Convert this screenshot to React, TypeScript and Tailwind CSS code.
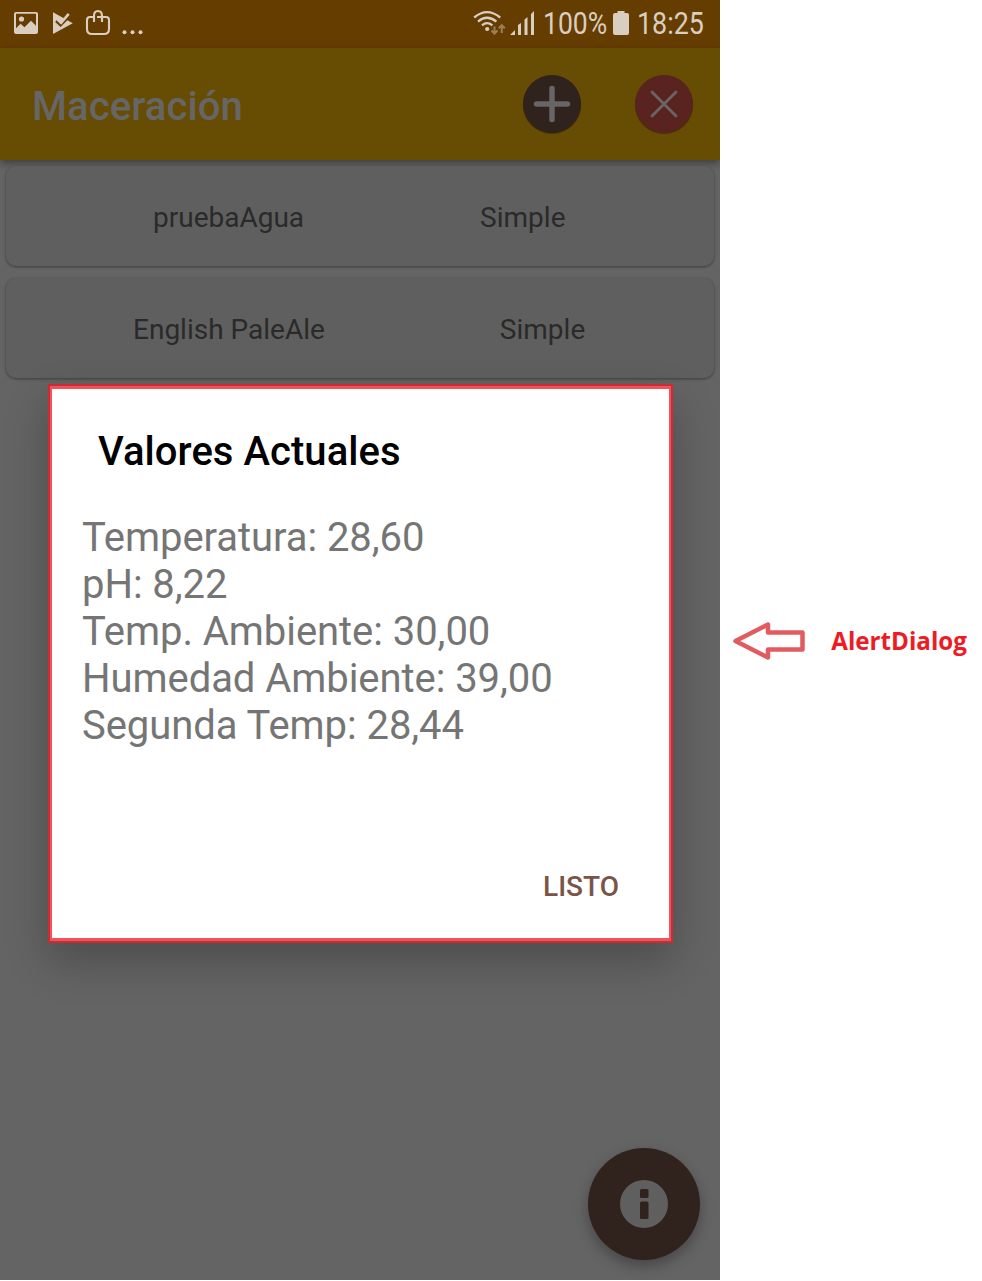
import React from "react";

function StatusBar() {
  return (
    <div className="flex h-12 shrink-0 bg-[#663d00] text-[#d9cebf]">
      <svg width="150" height="48" viewBox="0 0 150 48" fill="currentColor">
        <path fillRule="evenodd" d="M16 12h20a2 2 0 0 1 2 2v18a2 2 0 0 1-2 2H16a2 2 0 0 1-2-2V14a2 2 0 0 1 2-2zM16 13.8v14.4l4.5-4.5 4 3.5 6.5-6.5 5 5V13.8z" />
        <circle cx="21.5" cy="19" r="2.6" />
        <path d="M53 12.3V34L72.8 23.2z" />
        <path d="M56 21l4.6 4.3L70.5 15.5" fill="none" stroke="#663d00" strokeWidth="2.4" />
        <path d="M57.5 19.5l3.6 3.3 7.6-9" fill="none" stroke="currentColor" strokeWidth="2.6" />
        <path d="M93 17h-3q-3 0-3 3v9q0 5 5 5h12q5 0 5-5v-9q0-3-3-3h-9M94 22v-6q0-5 4-5t4 5v6" fill="none" stroke="currentColor" strokeWidth="2.1" />
        <circle cx="124.5" cy="32.3" r="2" /><circle cx="132.5" cy="32.3" r="2" /><circle cx="140.5" cy="32.3" r="2" />
      </svg>
      <svg className="ml-[320px] shrink-0" width="70" height="48" viewBox="0 0 70 48" fill="currentColor">
        <g fill="none" stroke="currentColor" strokeWidth="2.3">
          <path d="M4.2 17.5Q17 6.8 30.2 17.5" />
          <path d="M8 21.6Q17 14 26.4 21.6" />
          <path d="M12 25.3Q17 21 22.4 25.3" />
        </g>
        <circle cx="17.2" cy="29" r="2.1" />
        <g fill="none" stroke="#9b8057" strokeWidth="2">
          <path d="M24.5 26.5v7M21.5 30.5l3 3 3-3M31.8 33v-7.5M28.8 28.2l3-3 3 3" />
        </g>
        <path d="M40 35l5-5v5zM48 25l3-2v12h-3zM54.5 19.5l3-2.5v18h-3zM61 14l3-3v24h-3z" />
      </svg>
      <div className="w-[73px] shrink-0 pl-[3px] font-[Roboto] text-[32px] leading-[47px]">
        <span className="inline-block origin-left scale-x-[0.83]">100%</span>
      </div>
      <svg className="mr-[7px] shrink-0" width="17" height="48" viewBox="0 0 17 48" fill="currentColor">
        <path d="M4.5 11h7v2H14q2 0 2 2v18q0 2-2 2H2q-2 0-2-2V15q0-2 2-2h2.5z" />
      </svg>
      <div className="w-[82px] shrink-0 font-[Roboto] text-[32px] leading-[47px]">
        <span className="inline-block origin-left scale-x-[0.84]">18:25</span>
      </div>
    </div>
  );
}

function RecipeCard({ name, kind, className }: { name: string; kind: string; className: string }) {
  return (
    <div className={"flex h-[100px] shrink-0 items-center rounded-[10px] bg-[#5f5f5f] pt-[3px] text-[28px] text-[#2a2a2a] shadow-[0_1px_3px_rgba(0,0,0,0.4)] " + className}>
      <span>{name}</span>
      <span>{kind}</span>
    </div>
  );
}

function Dialog() {
  return (
    <div className="absolute left-[48px] top-[384px] h-[559px] w-[625px] border-2 border-[#c92c34] shadow-[0_18px_40px_rgba(0,0,0,0.24)]">
      <div className="flex h-full flex-col border-[3px] border-l-2 border-r-2 border-[#f4525a] bg-white">
        <h2 className="pl-[46px] pt-[39px] text-[40px] font-medium leading-[48px] tracking-[0.05px] text-black">Valores Actuales</h2>
        <div className="pl-[30px] pt-[38px] text-[40px] leading-[47px] tracking-[-0.06px] text-[#757575]">
          <p>Temperatura: 28,60</p>
          <p>pH: 8,22</p>
          <p>Temp. Ambiente: 30,00</p>
          <p>Humedad Ambiente: 39,00</p>
          <p>Segunda Temp: 28,44</p>
        </div>
        <button className="mr-[50px] mt-auto self-end pb-[34px] text-[28px] font-medium leading-[34px] text-[#795548]">LISTO</button>
      </div>
    </div>
  );
}

export default function App() {
  return (
    <main className="flex h-[1281px] w-[982px] overflow-hidden bg-white font-[Roboto,sans-serif]">
      <section className="relative flex h-[1280px] w-[720px] shrink-0 flex-col overflow-hidden bg-[#646464]">
        <StatusBar />
        <header className="flex h-28 shrink-0 items-center bg-[#664d03] pl-8 pr-[26px] shadow-[0_3px_8px_rgba(0,0,0,0.4)]">
          <h1 className="mr-auto pt-1.5 text-[40px] font-medium tracking-[0.1px] text-[#666]">Maceración</h1>
          <svg className="mr-[52px]" width="60" height="60" viewBox="0 0 60 60">
            <circle cx="30" cy="30.8" r="29.2" fill="#473500" />
            <circle cx="30" cy="30" r="29" fill="#30221d" />
            <path d="M14.5 30h31M30 14.5v31" stroke="#666" strokeWidth="5.5" strokeLinecap="round" />
          </svg>
          <svg width="60" height="60" viewBox="0 0 60 60">
            <circle cx="30" cy="30.8" r="29.2" fill="#473500" />
            <circle cx="30" cy="30" r="29" fill="#59241f" />
            <path d="M18 18l24 24M42 18L18 42" stroke="#6b6565" strokeWidth="2.8" strokeLinecap="round" />
          </svg>
        </header>
        <div className="flex flex-col gap-3 px-1.5 pt-1.5">
          <RecipeCard name="pruebaAgua" kind="Simple" className="gap-[176px] pl-[147px]" />
          <RecipeCard name="English PaleAle" kind="Simple" className="gap-[175px] pl-[127px]" />
        </div>
        <Dialog />
        <button className="absolute left-[588px] top-[1148px] h-28 w-28 rounded-full bg-[#30221d] shadow-[0_6px_14px_rgba(0,0,0,0.3)]">
          <svg width="112" height="112" viewBox="0 0 112 112">
            <circle cx="56" cy="56" r="24" fill="#5f5f5f" />
            <rect x="52" y="41" width="8.5" height="9" rx="1.5" fill="#30221d" />
            <rect x="52" y="53.5" width="8.5" height="17.5" rx="1.5" fill="#30221d" />
          </svg>
        </button>
      </section>
      <aside className="flex h-[1281px] items-center pl-3">
        <svg width="75" height="42" viewBox="0 0 75 42">
          <path d="M3.5 21L36 4.5V12.5H70.5V29.5H36V37.5z" fill="white" stroke="#e25b61" strokeWidth="4.5" strokeLinejoin="round" />
        </svg>
        <span className="origin-left scale-x-[0.968] pl-[25px] font-['Open_Sans',sans-serif] text-[25px] font-bold text-[#ed1c24]">AlertDialog</span>
      </aside>
    </main>
  );
}
